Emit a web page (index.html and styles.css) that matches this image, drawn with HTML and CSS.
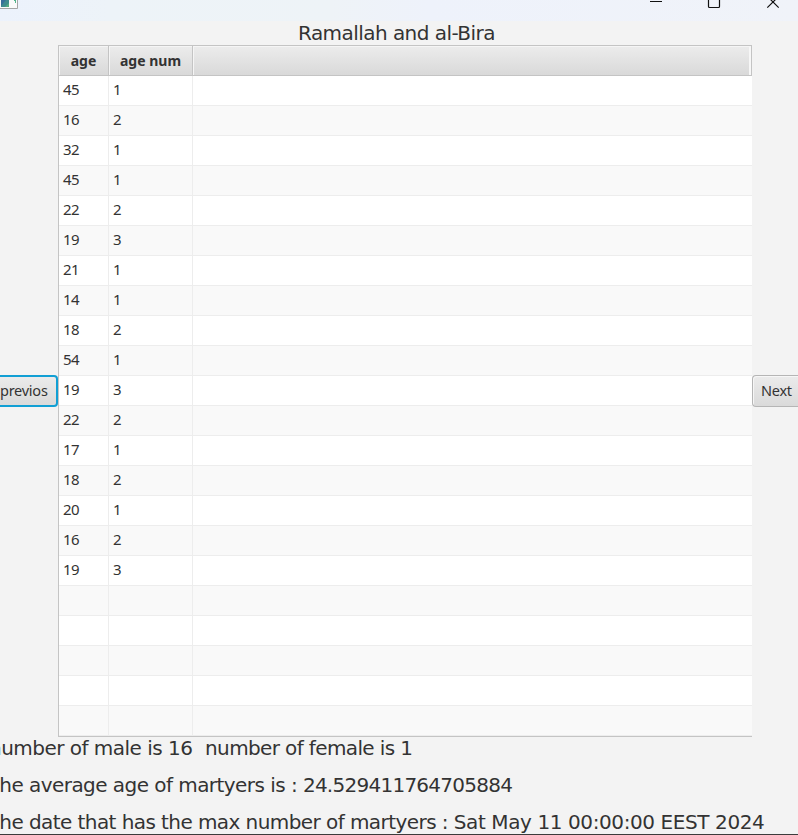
FILE: index.html
```html
<!DOCTYPE html>
<html lang="en">
<head>
<meta charset="utf-8">
<title>Ramallah and al-Bira</title>
<link rel="stylesheet" href="styles.css">
</head>
<body>
<div class="window">
  <header class="titlebar">
    <svg class="app-icon" width="18" height="9" viewBox="0 0 18 9">
      <path d="M0 0H17V8H0Z" fill="#fafafa"/>
      <path d="M1 0H9V7H1Z" fill="#3f8b8d"/>
      <path d="M1 0H6L1 6Z" fill="#386f9a"/>
      <path d="M5 7L9 3V7Z" fill="#55ab80"/>
      <path d="M14 0H16V3H15V1H14Z" fill="#55b48c"/>
      <path d="M17.5 0V8.5H0" fill="none" stroke="#a5a5a5"/>
    </svg>
    <svg class="controls" width="130" height="9" viewBox="0 0 130 9" fill="none" stroke="#111">
      <path d="M0 1.5H12"/>
      <path d="M58.5 0V6.5Q58.5 7.5 59.5 7.5H68.5Q69.5 7.5 69.5 6.5V0" stroke-width="1.2"/>
      <path d="M117.3 7.7L128.7 -3.7M128.7 7.7L117.3 -3.7" stroke-width="1.2"/>
    </svg>
  </header>
  <h1 class="heading"><span class="heading-text">Ramallah and al-Bira</span></h1>
  <main class="content">
    <button class="nav prev">previos</button>
    <table class="grid">
      <colgroup><col class="c-age"><col class="c-num"><col></colgroup>
      <thead><tr><th>age</th><th>age num</th><th class="filler"></th></tr></thead>
      <tbody>
        <tr><td>45</td><td>1</td><td></td></tr>
        <tr><td>16</td><td>2</td><td></td></tr>
        <tr><td>32</td><td>1</td><td></td></tr>
        <tr><td>45</td><td>1</td><td></td></tr>
        <tr><td>22</td><td>2</td><td></td></tr>
        <tr><td>19</td><td>3</td><td></td></tr>
        <tr><td>21</td><td>1</td><td></td></tr>
        <tr><td>14</td><td>1</td><td></td></tr>
        <tr><td>18</td><td>2</td><td></td></tr>
        <tr><td>54</td><td>1</td><td></td></tr>
        <tr><td>19</td><td>3</td><td></td></tr>
        <tr><td>22</td><td>2</td><td></td></tr>
        <tr><td>17</td><td>1</td><td></td></tr>
        <tr><td>18</td><td>2</td><td></td></tr>
        <tr><td>20</td><td>1</td><td></td></tr>
        <tr><td>16</td><td>2</td><td></td></tr>
        <tr><td>19</td><td>3</td><td></td></tr>
        <tr><td></td><td></td><td></td></tr>
        <tr><td></td><td></td><td></td></tr>
        <tr><td></td><td></td><td></td></tr>
        <tr><td></td><td></td><td></td></tr>
        <tr><td></td><td></td><td></td></tr>
      </tbody>
    </table>
    <button class="nav next">Next</button>
  </main>
  <footer class="stats">
    <p class="line males">number of male is 16&nbsp; <span class="females">number of female is 1</span></p>
    <p class="line average">the average age of martyers is : <span class="average-value">24.529411764705884</span></p>
    <p class="line date">the date that has the max number of martyers : <span class="date-value">Sat May 11 00:00:00 EEST 2024</span></p>
  </footer>
</div>
</body>
</html>
```
FILE: styles.css
```css
* { box-sizing: border-box; }
body { margin: 0; background: #f3f3f3; color: #333; }
.window {
  display: flex;
  flex-direction: column;
  width: 798px;
  height: 835px;
  overflow: hidden;
  border-bottom: 1px solid #3c3c3c;
}
.titlebar {
  display: flex;
  flex: none;
  justify-content: space-between;
  height: 21px;
  padding-right: 18px;
  background: linear-gradient(90deg, #ecf2fc 0, #edf3f8 110px, #eef3f7 330px, #eef2fb 430px, #f0f3f9 100%);
}
.heading {
  flex: none;
  height: 24px;
  margin: 0;
  padding-left: 298px;
  font: 400 20px/24px "DejaVu Sans", sans-serif;
  white-space: nowrap;
}
.heading-text { letter-spacing: -0.55px; }
.content {
  display: flex;
  flex: none;
  align-items: center;
  height: 692px;
  font: 15px/29px "Noto Sans", sans-serif;
}
.grid {
  width: 694px;
  height: 692px;
  border: solid #c4c4c4;
  border-width: 1px 0 1px 1px;
  border-spacing: 0;
  table-layout: fixed;
}
.c-age { width: 50px; }
.c-num { width: 84px; }
.grid th {
  height: 30px;
  padding: 0;
  border: solid #c4c4c4;
  border-width: 0 1px 1px 0;
  background: linear-gradient(#ececec, #d9d9d9);
  box-shadow: inset 1px 1px #f5f5f5;
  font-size: 14px;
  line-height: 29px;
}
.grid .filler { box-shadow: inset 1px 1px #f5f5f5, inset -2px 0 #f7f7f7; }
.grid td {
  height: 30px;
  padding: 0 0 2px 4px;
  border: solid #ededed;
  border-width: 0 1px 1px 0;
  background: #fff;
  font-size: 15px;
  letter-spacing: -0.6px;
  line-height: 27px;
}
.grid td:last-child { border-right: 0; }
.grid tr:nth-child(even) td { background: #f9f9f9; }
.nav {
  flex: none;
  height: 32px;
  margin: 0;
  padding: 0 0 2px;
  color: #333;
  background: linear-gradient(#ebebeb, #dadada);
  font: 14.5px/26px "Noto Sans", sans-serif;
  letter-spacing: -0.25px;
  text-align: left;
  white-space: nowrap;
}
.prev {
  width: 58px;
  border: solid #119fd4;
  border-width: 2px 2px 2px 0;
  border-radius: 0 4px 4px 0;
}
.next {
  width: 46px;
  padding-left: 8px;
  border: solid #b5b5b5;
  border-width: 1px 0 1px 1px;
  border-radius: 4px 0 0 4px;
  box-shadow: inset 1px 1px #f6f6f6;
}
.stats { flex: none; margin-top: -1px; font: 20px/24px "DejaVu Sans", sans-serif; }
.line { margin: 0 0 13px; white-space: pre; }
.males { margin-left: -11px; letter-spacing: -0.52px; }
.females { margin-left: 1px; letter-spacing: -0.63px; }
.average { margin-left: -8px; letter-spacing: -0.55px; }
.average-value { letter-spacing: -0.74px; }
.date { margin-left: -8px; letter-spacing: -0.57px; }
.date-value { letter-spacing: -0.4px; }
```
